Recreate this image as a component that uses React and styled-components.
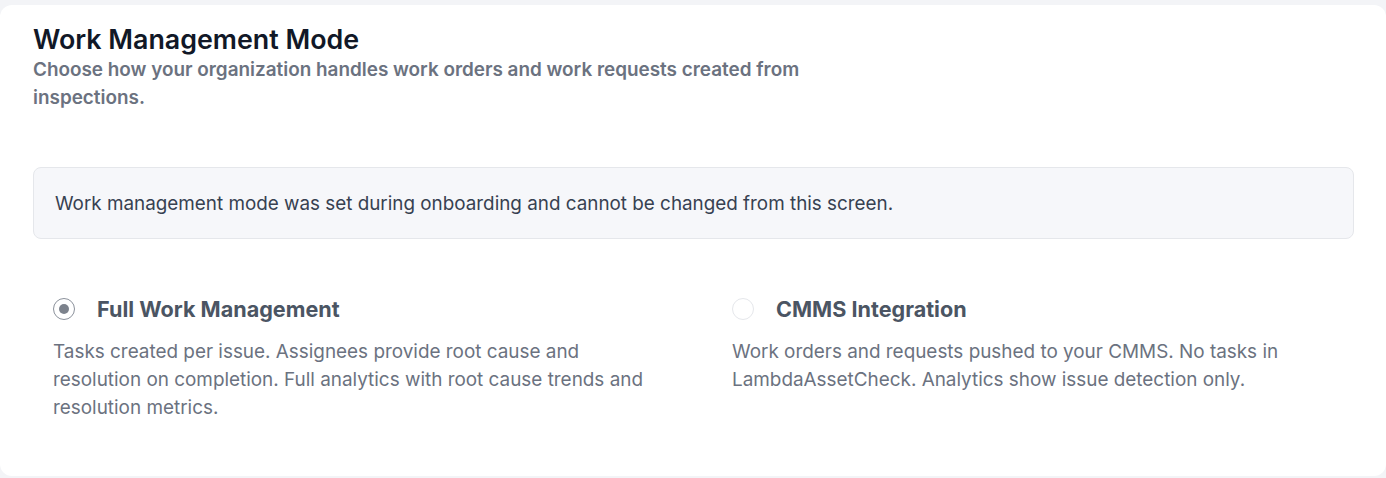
import React from 'react'
import styled, { createGlobalStyle } from 'styled-components'

const GlobalStyle = createGlobalStyle`
  * { box-sizing: border-box; }
  body {
    margin: 0;
    background: #f3f4f7;
    font-family: Inter, "Noto Sans", sans-serif;
    -webkit-font-smoothing: antialiased;
  }
`

const Page = styled.div`
  padding-top: 5px;
  padding-bottom: 2px;
`

const Card = styled.section`
  background: #ffffff;
  border-radius: 12px;
  height: 471px;
  padding: 17px 32px 0 33px;
`

const Title = styled.h2`
  margin: 0;
  font-size: 26.8px;
  line-height: 34px;
  font-weight: 600;
  color: #111827;
`

const Subtitle = styled.p`
  margin: 0;
  max-width: 820px;
  font-size: 18.9px;
  line-height: 28px;
  font-weight: 600;
  color: #6b7280;
`

const Notice = styled.div`
  margin-top: 55px;
  height: 72px;
  display: flex;
  align-items: center;
  padding: 0 21px;
  background: #f6f7fa;
  border: 1px solid #e5e7eb;
  border-radius: 8px;
  font-size: 18.85px;
  color: #374151;
`

const Options = styled.div`
  margin-top: 58px;
  padding-left: 20px;
  display: grid;
  grid-template-columns: 639px 1fr;
  gap: 40px;
`

const Option = styled.div`
  display: flex;
  flex-direction: column;
`

const OptionHead = styled.label`
  display: flex;
  align-items: center;
  gap: 22px;
  height: 24px;
`

const Radio = styled.span`
  width: 22px;
  height: 22px;
  border-radius: 50%;
  border: 1px solid ${p => (p.$checked ? '#8b919b' : '#e5e7eb')};
  background: #fff;
  display: flex;
  align-items: center;
  justify-content: center;
  flex-shrink: 0;

  &::after {
    content: '';
    width: 10px;
    height: 10px;
    border-radius: 50%;
    background: ${p => (p.$checked ? '#7c828c' : 'transparent')};
  }
`

const OptionTitle = styled.span`
  font-size: 21.6px;
  font-weight: 700;
  color: #4b5563;
`

const OptionText = styled.p`
  margin: 17px 0 0;
  max-width: 610px;
  font-size: 18.9px;
  line-height: 28px;
  color: #6b7280;
`

const modes = [
  {
    title: 'Full Work Management',
    checked: true,
    text: 'Tasks created per issue. Assignees provide root cause and resolution on completion. Full analytics with root cause trends and resolution metrics.',
  },
  {
    title: 'CMMS Integration',
    checked: false,
    text: 'Work orders and requests pushed to your CMMS. No tasks in LambdaAssetCheck. Analytics show issue detection only.',
  },
]

export default function App() {
  return (
    <Page>
      <GlobalStyle />
      <Card>
        <Title>Work Management Mode</Title>
        <Subtitle>
          Choose how your organization handles work orders and work requests created from inspections.
        </Subtitle>
        <Notice>
          Work management mode was set during onboarding and cannot be changed from this screen.
        </Notice>
        <Options>
          {modes.map(m => (
            <Option key={m.title}>
              <OptionHead>
                <Radio $checked={m.checked} />
                <OptionTitle>{m.title}</OptionTitle>
              </OptionHead>
              <OptionText>{m.text}</OptionText>
            </Option>
          ))}
        </Options>
      </Card>
    </Page>
  )
}
